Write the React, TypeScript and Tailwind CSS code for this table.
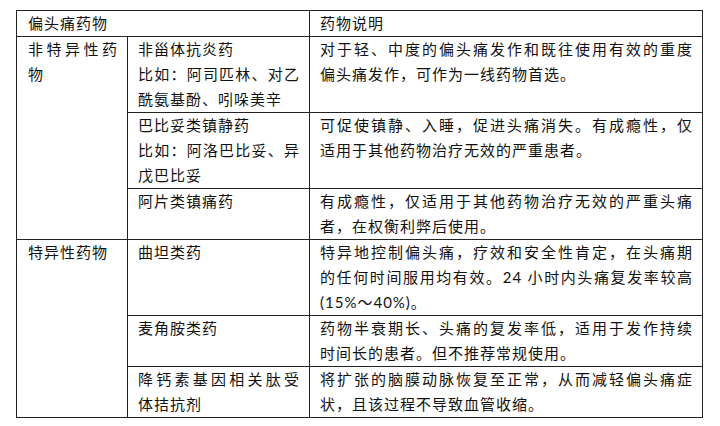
import React from 'react';

type Line = { text: string; full?: boolean };

const Cell: React.FC<{ lines: Line[]; className?: string; rowSpan?: number }> = ({ lines, className = '', rowSpan }) => (
  <td rowSpan={rowSpan} className={`border border-[#222] align-top pl-[10px] pr-[9px] py-0 ${className}`}>
    {lines.map((l, i) => (
      <div key={i} className={l.full ? 'text-justify [text-align-last:justify] whitespace-nowrap' : 'whitespace-nowrap'}>
        {l.text}
      </div>
    ))}
  </td>
);

const ROWS: { name: Line[]; desc: Line[] }[] = [
  {
    name: [{ text: '非甾体抗炎药' }, { text: '比如：阿司匹林、对乙', full: true }, { text: '酰氨基酚、吲哚美辛' }],
    desc: [{ text: '对于轻、中度的偏头痛发作和既往使用有效的重度', full: true }, { text: '偏头痛发作，可作为一线药物首选。' }],
  },
  {
    name: [{ text: '巴比妥类镇静药' }, { text: '比如：阿洛巴比妥、异', full: true }, { text: '戊巴比妥' }],
    desc: [{ text: '可促使镇静、入睡，促进头痛消失。有成瘾性，仅', full: true }, { text: '适用于其他药物治疗无效的严重患者。' }],
  },
  {
    name: [{ text: '阿片类镇痛药' }],
    desc: [{ text: '有成瘾性，仅适用于其他药物治疗无效的严重头痛', full: true }, { text: '者，在权衡利弊后使用。' }],
  },
  {
    name: [{ text: '曲坦类药' }],
    desc: [
      { text: '特异地控制偏头痛，疗效和安全性肯定，在头痛期', full: true },
      { text: '的任何时间服用均有效。24 小时内头痛复发率较高', full: true },
      { text: '(15%～40%)。' },
    ],
  },
  {
    name: [{ text: '麦角胺类药' }],
    desc: [{ text: '药物半衰期长、头痛的复发率低，适用于发作持续', full: true }, { text: '时间长的患者。但不推荐常规使用。' }],
  },
  {
    name: [{ text: '降钙素基因相关肽受', full: true }, { text: '体拮抗剂' }],
    desc: [{ text: '将扩张的脑膜动脉恢复至正常，从而减轻偏头痛症', full: true }, { text: '状，且该过程不导致血管收缩。' }],
  },
];

const App: React.FC = () => {
  return (
    <div className="w-[720px] h-[426px] bg-white pt-[10px] pl-[16px] text-[#111] text-[15px] leading-[25px] tracking-[1px] font-['Lato','Noto_Sans_CJK_SC',sans-serif]">
      <table className="table-fixed border-collapse w-[686px]">
        <colgroup>
          <col className="w-[111px]" />
          <col className="w-[182px]" />
          <col className="w-[393px]" />
        </colgroup>
        <tbody>
          <tr>
            <td colSpan={2} className="border border-[#222] pl-[11px] align-top">偏头痛药物</td>
            <td className="border border-[#222] pl-[10px] align-top">药物说明</td>
          </tr>
          {ROWS.map((r, i) => (
            <tr key={i}>
              {i === 0 && (
                <Cell rowSpan={3} className="pl-[11px]" lines={[{ text: '非特异性药', full: true }, { text: '物' }]} />
              )}
              {i === 3 && <Cell rowSpan={3} className="pl-[11px]" lines={[{ text: '特异性药物' }]} />}
              <Cell lines={r.name} />
              <Cell lines={r.desc} />
            </tr>
          ))}
        </tbody>
      </table>
    </div>
  );
};

export default App;
